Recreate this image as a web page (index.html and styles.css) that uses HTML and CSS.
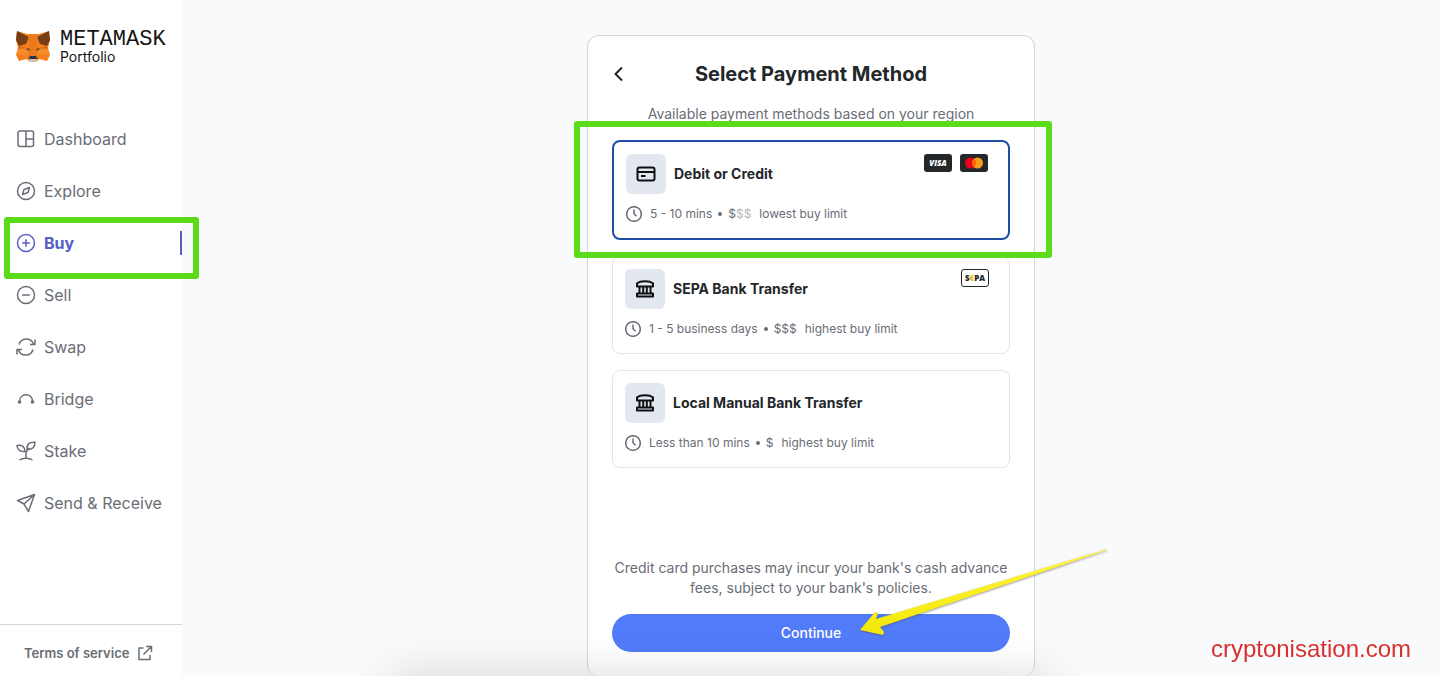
FILE: index.html
```html
<!DOCTYPE html>
<html lang="en">
<head>
  <meta charset="utf-8">
  <title>MetaMask Portfolio - Buy</title>
  <meta name="viewport" content="width=device-width, initial-scale=1">
  <link rel="stylesheet" href="styles.css">
</head>
<body>

<svg class="defs" aria-hidden="true">
  <symbol id="clock" viewBox="0 0 16 16"><circle cx="8" cy="8" r="7.3"/><path d="M8 3.5v4.3l2.6 2.4"/></symbol>
  <symbol id="bank" viewBox="0 0 20 20"><path d="M2 7.5V4.300L5 2.800Q10 1.500 15 2.800l3 1.500v3.200zM4.500 7.500v7.500M8.200 7.500v7.500M11.800 7.500v7.500M15.500 7.500v7.500M2 14.500h16v3H2z"/></symbol>
</svg>

<aside class="sidebar">
  <a class="logo" href="#">
    <svg class="fox" viewBox="0 0 34 32" aria-hidden="true">
      <path fill="#f4811f" d="M1 1 11 4h12L33 1l1 9-2 8 2 7-3 6-8-2-3 3h-6l-3-3-8 2-3-6 2-7-2-8z"/>
      <path fill="#763d16" d="M1 1l12 6-3 7-7 2-3-6zM33 1 21 7l3 7 7 2 3-6z"/>
      <path fill="#ec7a1c" d="M12 5h10l-1 9 1 8-2 5h-6l-2-5 1-8z"/>
      <path fill="#f78c2b" d="M2 19l9-1 2 6-13 1zM32 19l-9-1-2 6 13 1z"/>
      <path fill="#d96b18" d="M3 16l8 2-9 1zM31 16l-8 2 9 1zM11 29l2-4 1 4zM23 29l-2-4-1 4z"/>
      <path fill="#7a4a25" d="M9 19l4-1 1 3zM25 19l-4-1-1 3z"/>
      <path fill="#233447" d="M14 26h6l1 3h-8z"/>
      <path fill="#d5bfb2" d="M13 29h8l-1 3h-6z"/>
    </svg>
    <span class="wordmark"><span class="brand">METAMASK</span><span class="product">Portfolio</span></span>
  </a>

  <nav class="nav">
    <a href="#"><svg viewBox="0 0 20 20"><rect x="2" y="2" width="15.500" height="15.500" rx="2"/><path d="M10 2v15.500M10 10h7.500"/></svg>Dashboard</a>
    <a href="#"><svg viewBox="0 0 20 20"><circle cx="10" cy="10" r="8.500"/><path d="M13.500 6.500 12 11.500 6.500 13.500 8 8.500z"/></svg>Explore</a>
    <a href="#" class="active" aria-current="page"><svg viewBox="0 0 20 20"><circle cx="10" cy="10" r="8.500"/><path d="M10 6.200v7.600M6.200 10h7.600"/></svg>Buy<span class="highlight"></span></a>
    <a href="#"><svg viewBox="0 0 20 20"><circle cx="10" cy="10" r="8.500"/><path d="M6.200 10h7.600"/></svg>Sell</a>
    <a href="#"><svg viewBox="0 0 20 20"><path d="M3 7.500a7.600 7.600 0 0 1 14.500-.5M19 2.500V7.500h-5M17 12.500a7.600 7.600 0 0 1-14.500.5M1 17.500V12.500h5"/></svg>Swap</a>
    <a href="#"><svg viewBox="0 0 20 20"><path d="M3.500 12.500C3.500 3.500 16.500 3.500 16.500 12"/><circle class="dot" cx="3.500" cy="13" r="1.800"/><circle class="dot" cx="16.500" cy="13" r="1.800"/></svg>Bridge</a>
    <a href="#"><svg viewBox="0 0 20 20"><path d="M1 4.500c5-1 8 1.500 8 6-5 .5-7.500-1.500-8-6zM19 1.200c-5.500-.5-8.500 2-8 7.300 5 .3 8-2 8-7.300zM10 18v-7l3.500-4M3.500 19c3-2.200 10-2.200 13 0"/></svg>Stake</a>
    <a href="#"><svg viewBox="0 0 20 20"><path d="M18.500 1.500 1.500 7.500l6.500 3.500 4.500 7.500zM18.500 1.500 8 11"/></svg>Send &amp; Receive</a>
  </nav>

  <a class="terms" href="#">Terms of service
    <svg viewBox="0 0 16 16"><path d="M6.500 3H2v11.500h11V10M9 1.500h5.500V7M14.500 1.500 6.500 9.500"/></svg>
  </a>
</aside>

<main>
  <form class="card">
    <header>
      <button type="button" class="back" aria-label="Back"><svg viewBox="0 0 16 16"><path d="M10 1.500 3.500 8l6.500 6.500"/></svg></button>
      <h1>Select Payment Method</h1>
    </header>
    <p class="subtitle">Available payment methods based on your region</p>

    <div class="options">
      <label class="option selected">
        <input type="radio" name="method" value="card" checked>
        <span class="top">
          <span class="icon"><svg viewBox="0 0 20 20"><rect x="1.500" y="3.500" width="17" height="13" rx="2"/><path d="M1.500 8h17M5 12h4.500"/></svg></span>
          <span class="name">Debit or Credit</span>
          <span class="badges">
            <span class="badge visa">VISA</span>
            <svg class="badge" viewBox="0 0 28 18" role="img" aria-label="Mastercard"><circle cx="10.500" cy="9" r="5.500" fill="#eb001b"/><circle cx="17.500" cy="9" r="5.500" fill="#f79e1b"/><path fill="#ff5f00" d="M14 4.800a5.500 5.500 0 0 1 0 8.400 5.500 5.500 0 0 1 0-8.400z"/></svg>
          </span>
        </span>
        <span class="meta"><svg><use href="#clock"/></svg><span>5 - 10 mins</span><i></i><span>$<span class="off">$$</span></span><span>lowest buy limit</span></span>
        <span class="highlight"></span>
      </label>

      <label class="option">
        <input type="radio" name="method" value="sepa">
        <span class="top">
          <span class="icon"><svg><use href="#bank"/></svg></span>
          <span class="name">SEPA Bank Transfer</span>
          <span class="badges"><span class="badge sepa">S<b>€</b>PA</span></span>
        </span>
        <span class="meta"><svg><use href="#clock"/></svg><span>1 - 5 business days</span><i></i><span>$$$</span><span>highest buy limit</span></span>
      </label>

      <label class="option">
        <input type="radio" name="method" value="manual">
        <span class="top">
          <span class="icon"><svg><use href="#bank"/></svg></span>
          <span class="name">Local Manual Bank Transfer</span>
        </span>
        <span class="meta"><svg><use href="#clock"/></svg><span>Less than 10 mins</span><i></i><span>$</span><span>highest buy limit</span></span>
      </label>
    </div>

    <p class="note">Credit card purchases may incur your bank's cash advance fees, subject to your bank's policies.</p>
    <button type="submit" class="continue">Continue</button>

    <svg class="arrow" viewBox="0 0 250 90" aria-hidden="true">
      <defs><linearGradient id="y" x1="0" y1="0" x2=".3" y2="1"><stop offset=".3" stop-color="#fff43c"/><stop offset="1" stop-color="#f0e600"/></linearGradient></defs>
      <path fill="url(#y)" d="M1 82 16 64l3 1-2 6L248 1v1L21 79l4 5-1 3z"/>
    </svg>
  </form>
</main>

<div class="edge-shadow"></div>
<div class="watermark">cryptonisation.com</div>

</body>
</html>
```
FILE: styles.css
```css
* { box-sizing: border-box; }

body {
  display: flex;
  min-height: 100vh;
  margin: 0;
  background: #f9fafc;
  color: #24272a;
  font: 14px/20px Inter, "Liberation Sans", sans-serif;
  overflow: hidden;
}

a { color: inherit; text-decoration: none; }
h1, p { margin: 0; }
svg { fill: none; stroke: currentColor; stroke-width: 1.5; stroke-linejoin: round; flex: none; }
.defs { position: absolute; width: 0; height: 0; }

/* sidebar */
.sidebar {
  display: flex;
  flex-direction: column;
  flex: none;
  width: 182px;
  background: #fff;
  color: #6a6d76;
}
.logo {
  display: flex;
  gap: 10px;
  padding: 30px 0 0 16px;
  height: 113px;
  color: #161616;
}
.fox { width: 34px; height: 32px; stroke: none; }
.wordmark { display: flex; flex-direction: column; }
.brand { font: 22px/20px "Liberation Mono", monospace; }
.product { line-height: 14px; }

.nav { flex: 1; }
.nav a {
  display: flex;
  align-items: center;
  gap: 8px;
  position: relative;
  height: 52px;
  padding-left: 16px;
  font-size: 16px;
}
.nav svg { width: 20px; height: 20px; }
.dot { fill: currentColor; stroke: none; }
.nav .active { color: #5560c4; font-weight: 700; }
.nav .active::after {
  content: "";
  width: 2px;
  height: 24px;
  margin-left: auto;
  background: #5560c4;
}
.terms {
  display: flex;
  align-items: center;
  gap: 8px;
  height: 52px;
  padding: 4px 0 0 24px;
  border-top: 1px solid #d3d5d9;
  font-size: 13px;
  font-weight: 600;
}
.terms svg { width: 16px; height: 16px; }

/* payment card */
main {
  display: flex;
  justify-content: center;
  flex: 1;
  padding-top: 35px;
}
.card {
  display: flex;
  flex-direction: column;
  position: relative;
  width: 100%;
  max-width: 448px;
  padding: 24px;
  border: 1px solid #d3d5d9;
  border-bottom: 0;
  border-radius: 12px;
  background: #fff;
}
header {
  display: grid;
  grid-template-columns: 16px 1fr 16px;
  align-items: center;
  height: 28px;
}
h1 { font-size: 20px; line-height: 28px; text-align: center; white-space: nowrap; }
button { border: 0; font: inherit; cursor: pointer; }
.back { display: flex; padding: 0; background: none; color: #24272a; }
.back svg { width: 16px; height: 16px; stroke-width: 2; }
.subtitle, .note { color: #6a6d76; text-align: center; }
.subtitle { margin: 16px 0; }

.options { display: flex; flex-direction: column; gap: 16px; margin-bottom: auto; }
.option {
  display: flex;
  flex-direction: column;
  gap: 8px;
  position: relative;
  padding: 12px;
  border: 1px solid #e3e5e9;
  border-radius: 8px;
}
.option.selected { border: 2px solid #1f4fa3; }
.option input { position: absolute; opacity: 0; }
.top { display: flex; align-items: center; gap: 8px; }
.icon {
  display: flex;
  align-items: center;
  justify-content: center;
  width: 40px;
  height: 40px;
  border-radius: 6px;
  background: #e2e7f0;
  color: #111;
}
.icon svg { width: 20px; height: 20px; stroke-width: 2; }
.name { font-weight: 700; }
.badges { display: flex; align-self: flex-start; gap: 8px; margin: 0 8px 0 auto; }
.badge {
  width: 28px;
  height: 18px;
  border-radius: 3px;
  background: #24272a;
  color: #fff;
  stroke: none;
  font: 800 8px/18px "Open Sans", sans-serif;
  text-align: center;
}
.visa { font-style: italic; }
.sepa { border: 1px solid #24272a; background: #fff; color: #24272a; line-height: 16px; }
.sepa b { color: #f0bf2c; }
.meta {
  display: flex;
  align-items: center;
  gap: 8px;
  height: 24px;
  color: #6a6d76;
  font-size: 12px;
}
.meta svg { width: 16px; height: 16px; }
.meta i { width: 4px; height: 4px; margin: 0 -2px; border-radius: 50%; background: #6a6d76; }
.off { color: #b5b7bd; }

.note { margin-bottom: 16px; }
.continue {
  height: 38px;
  border-radius: 19px;
  background: #527bfa;
  color: #fff;
  font-weight: 500;
}

/* annotations over the page */
.highlight {
  position: absolute;
  z-index: 1;
  border: 6px solid #5bdc1b;
  border-radius: 3px;
  pointer-events: none;
}
.nav .highlight { inset: 0 -17px -10px 4px; }
.option .highlight { inset: -21px -44px -20px -40px; }
.arrow {
  position: absolute;
  right: -75px;
  bottom: 38px;
  width: 250px;
  height: 90px;
  stroke: none;
  filter: drop-shadow(0 1px 1px #5559);
  pointer-events: none;
}
.edge-shadow {
  position: fixed;
  right: 390px;
  bottom: -20px;
  left: 390px;
  height: 20px;
  box-shadow: 0 0 40px #0003;
}
.watermark {
  position: fixed;
  right: 29px;
  bottom: 13px;
  color: #d9302f;
  font: 24px/28px "Liberation Sans", sans-serif;
}
```
